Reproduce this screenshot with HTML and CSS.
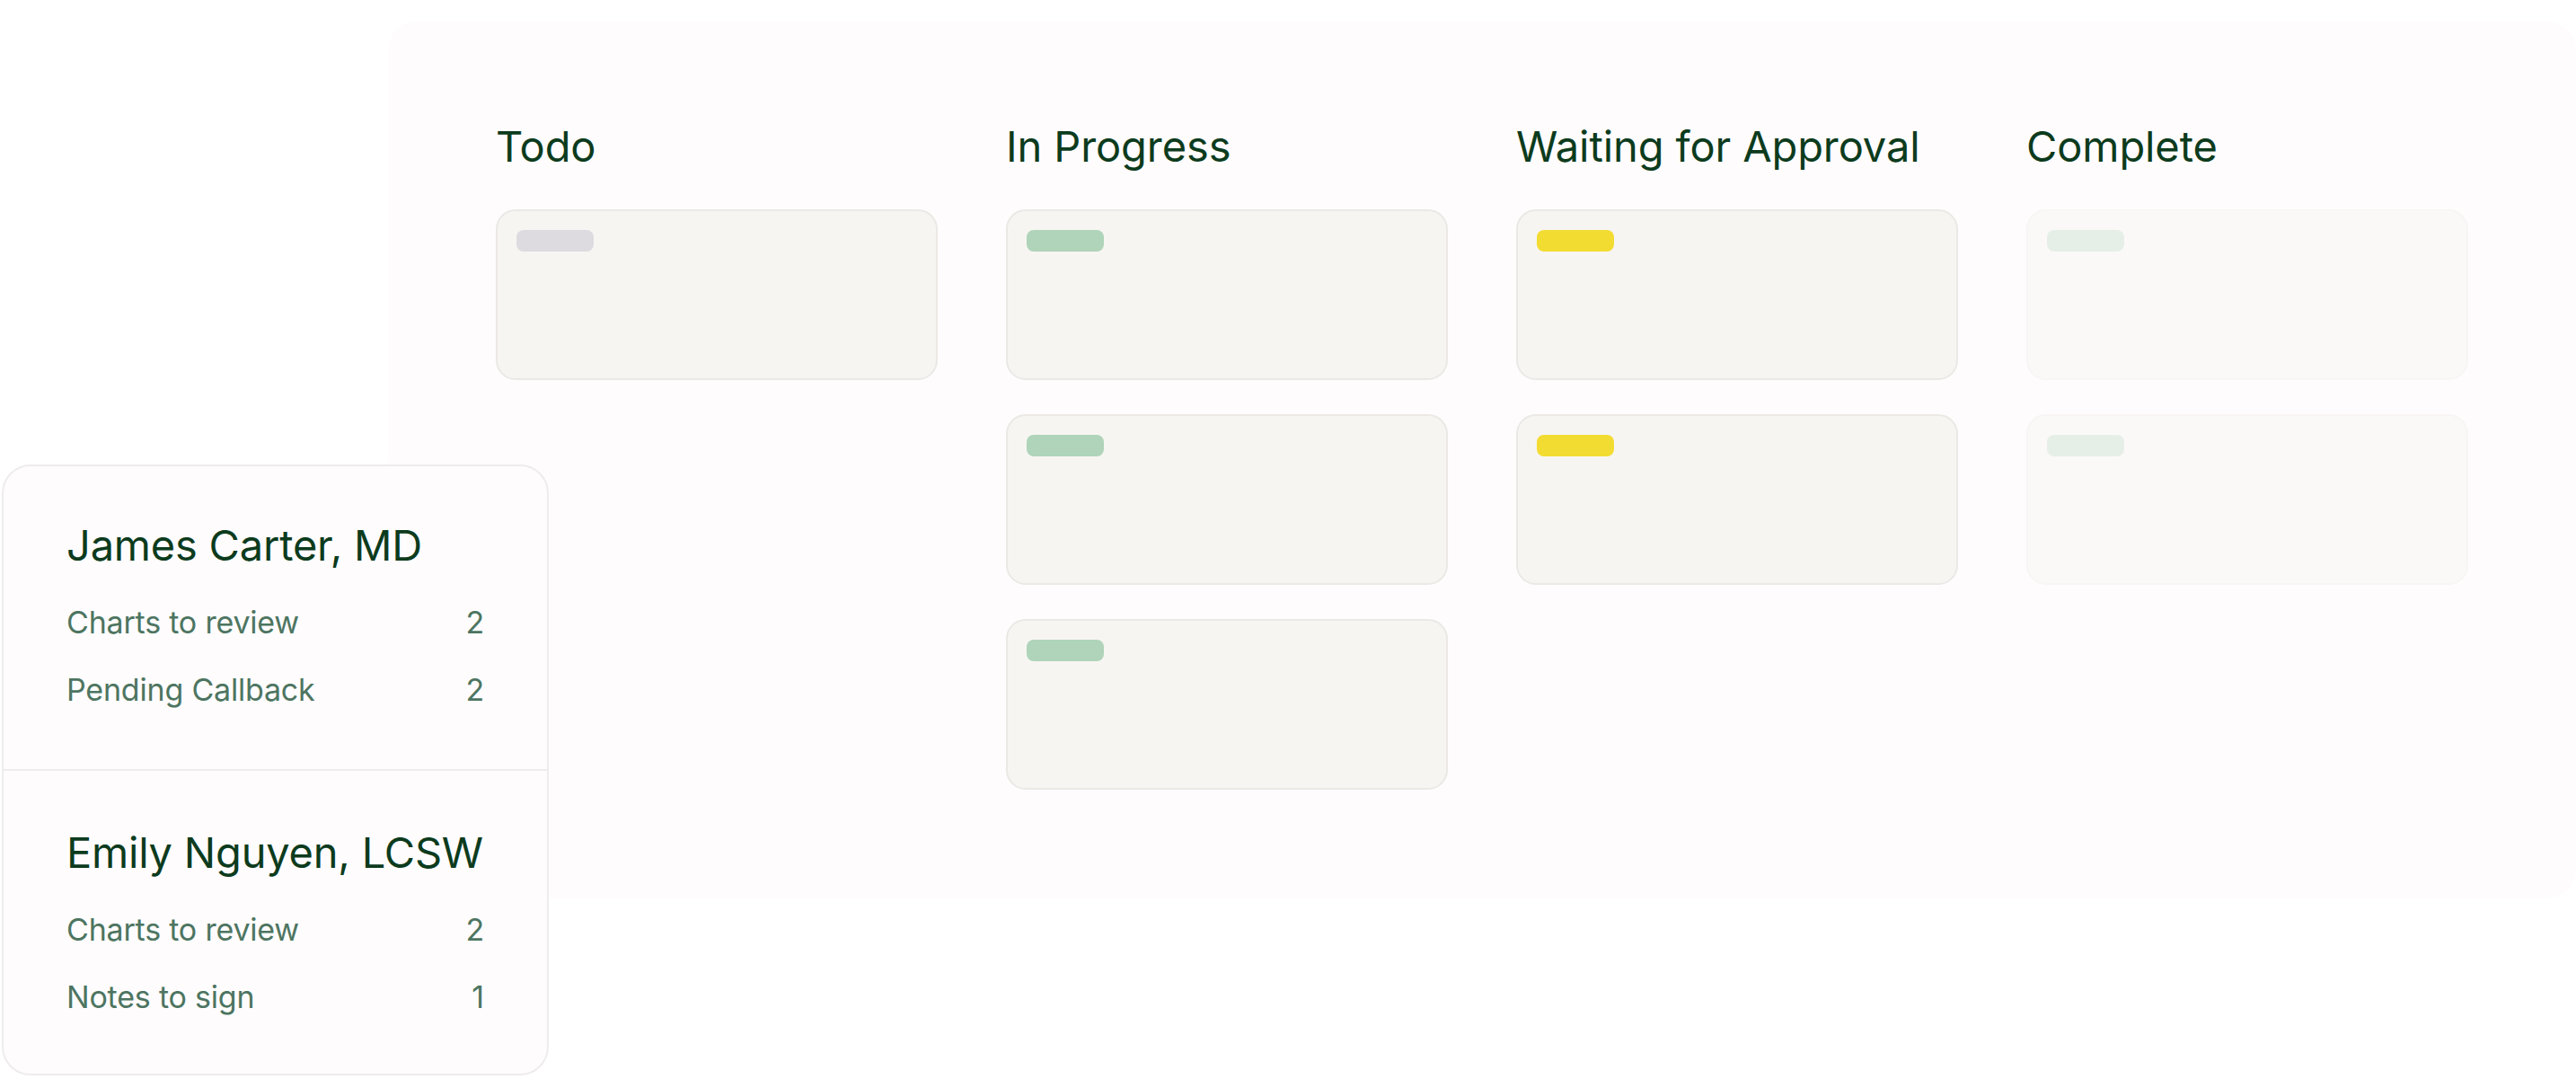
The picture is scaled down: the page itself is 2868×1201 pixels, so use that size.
FILE: index.html
```html
<!DOCTYPE html>
<html lang="en">
<head>
<meta charset="utf-8">
<title>Board</title>
<link rel="stylesheet" href="styles.css">
</head>
<body>
<div class="stage">
  <section class="board">
    <div class="column">
      <h2 class="col-title">Todo</h2>
      <div class="card"><span class="pill pill-grey"></span></div>
    </div>
    <div class="column">
      <h2 class="col-title">In Progress</h2>
      <div class="card"><span class="pill pill-green"></span></div>
      <div class="card"><span class="pill pill-green"></span></div>
      <div class="card"><span class="pill pill-green"></span></div>
    </div>
    <div class="column">
      <h2 class="col-title">Waiting for Approval</h2>
      <div class="card"><span class="pill pill-yellow"></span></div>
      <div class="card"><span class="pill pill-yellow"></span></div>
    </div>
    <div class="column column-faded">
      <h2 class="col-title">Complete</h2>
      <div class="card"><span class="pill pill-green"></span></div>
      <div class="card"><span class="pill pill-green"></span></div>
    </div>
  </section>

  <aside class="summary">
    <div class="person">
      <h3 class="person-name">James Carter, MD</h3>
      <div class="row"><span>Charts to review</span><span>2</span></div>
      <div class="row"><span>Pending Callback</span><span>2</span></div>
    </div>
    <div class="person person-second">
      <h3 class="person-name">Emily Nguyen, LCSW</h3>
      <div class="row"><span>Charts to review</span><span>2</span></div>
      <div class="row"><span>Notes to sign</span><span>1</span></div>
    </div>
  </aside>
</div>
</body>
</html>
```

FILE: styles.css
```css
html, body {
  margin: 0;
  padding: 0;
  background: #ffffff;
}

body {
  font-family: Inter, "Liberation Sans", Arial, sans-serif;
  width: 2868px;
  height: 1201px;
  overflow: hidden;
}

.stage {
  position: relative;
  width: 2868px;
  height: 1201px;
  box-sizing: border-box;
  padding: 24px 0 0 432px;
}

.board {
  width: 2436px;
  height: 976px;
  box-sizing: border-box;
  background: #fefcfc;
  border-radius: 32px;
  padding: 111px 0 0 120px;
  display: grid;
  grid-template-columns: repeat(4, 492px);
  column-gap: 76px;
  align-items: start;
}

.column {
  display: flex;
  flex-direction: column;
  gap: 38px;
}

.col-title {
  margin: 0 0 4px 0;
  font-size: 47px;
  line-height: 56px;
  font-weight: 400;
  color: #0c3b1d;
  letter-spacing: -0.1px;
  white-space: nowrap;
}

.card {
  height: 190px;
  box-sizing: border-box;
  background: #f7f5f2;
  border: 2px solid #ebe8e5;
  border-radius: 22px;
  padding: 21px;
}

.column-faded .card {
  opacity: 0.3;
}

.pill {
  display: block;
  width: 86px;
  height: 24px;
  border-radius: 8px;
}

.pill-grey { background: #dddbdf; }
.pill-green { background: #afd4b9; }
.pill-yellow { background: #f3dc32; }

.summary {
  position: absolute;
  left: 2px;
  top: 517px;
  width: 609px;
  height: 680px;
  box-sizing: border-box;
  background: #fefcfd;
  border: 2px solid #efecee;
  border-radius: 32px;
  display: flex;
  flex-direction: column;
}

.person {
  padding: 60px 70px 51px 70px;
}

.person-second {
  border-top: 2px solid #efecee;
  padding-top: 63px;
}

.person-name {
  margin: 0 0 20px 0;
  font-size: 47px;
  line-height: 56px;
  font-weight: 400;
  color: #0c3b1d;
  letter-spacing: -0.2px;
  white-space: nowrap;
}

.row {
  display: flex;
  justify-content: space-between;
  font-size: 34px;
  line-height: 75px;
  color: #4d7561;
  letter-spacing: -0.2px;
}
```
